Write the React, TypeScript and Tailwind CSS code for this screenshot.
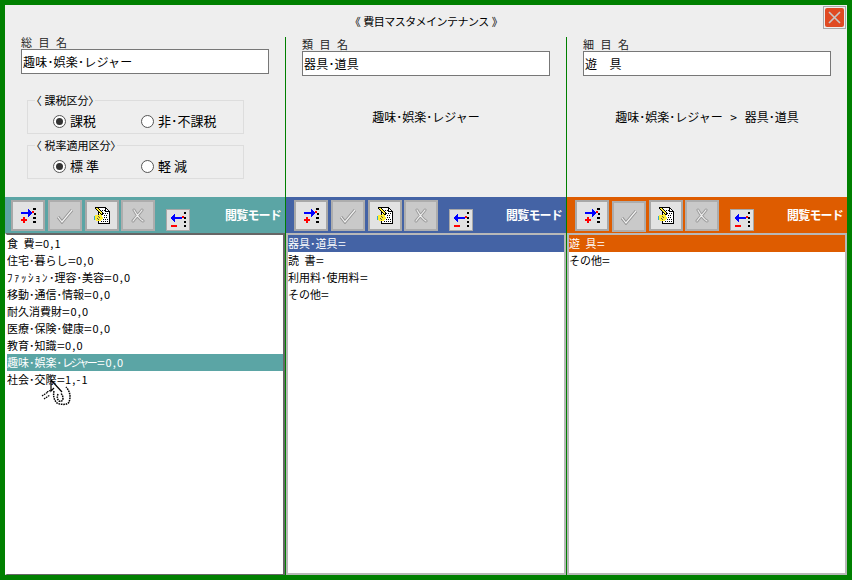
import React from "react";

const font = { fontFamily: '"Noto Sans CJK JP", "Noto Sans", sans-serif' };

function ButtonFrame({ disabled, className, children }: { disabled?: boolean; className: string; children: React.ReactNode }) {
  return (
    <div className={`flex items-center justify-center border-2 ${disabled ? "border-[#adadad] bg-[#c9c9c9]" : "border-[#a8a8a8] bg-[#e2e2e2]"} ${className}`}>
      {children}
    </div>
  );
}

function AddIcon() {
  return (
    <svg width="15" height="16" viewBox="0 0 15 16" shapeRendering="crispEdges">
      <rect x="0" y="4" width="8" height="2" fill="#0000ff" />
      <path d="M7 1h1v1h1v1h1v1h1v2h-1v1h-1v1h-1v1h-1z" fill="#0000ff" />
      <rect x="11" y="3" width="2" height="2" fill="#ff0000" />
      <rect x="12" y="0" width="3" height="2" fill="#000" />
      <rect x="13" y="5" width="2" height="2" fill="#000" />
      <rect x="12" y="9" width="3" height="2" fill="#000" />
      <rect x="12" y="13" width="3" height="2" fill="#000" />
      <rect x="2" y="9" width="2" height="6" fill="#ff0000" />
      <rect x="0" y="11" width="6" height="2" fill="#ff0000" />
    </svg>
  );
}

function RemoveIcon() {
  return (
    <svg width="15" height="16" viewBox="0 0 15 16" shapeRendering="crispEdges">
      <rect x="3" y="5" width="8" height="2" fill="#0000ff" />
      <path d="M4 2h-1v1h-1v1h-1v1h-1v2h1v1h1v1h1v1h1z" fill="#0000ff" />
      <rect x="11" y="4" width="2" height="2" fill="#ff0000" />
      <rect x="13" y="0" width="2" height="2" fill="#000" />
      <rect x="13" y="5" width="2" height="2" fill="#000" />
      <rect x="13" y="9" width="2" height="2" fill="#000" />
      <rect x="13" y="13" width="2" height="2" fill="#000" />
      <rect x="0" y="13" width="6" height="2" fill="#ff0000" />
    </svg>
  );
}

function CheckIcon() {
  return (
    <svg width="18" height="16" viewBox="0 0 18 16">
      <path d="M2 9l4 5L16 2" fill="none" stroke="#929292" strokeWidth="3" />
      <path d="M2 9l4 5L16 2" fill="none" stroke="#f2f2f2" strokeWidth="1.2" />
    </svg>
  );
}

function CrossIcon() {
  return (
    <svg width="14" height="15" viewBox="0 0 14 15">
      <path d="M3 2c2 3 4 8 9 11M11 2C9 5 5 9 2 13" fill="none" stroke="#9a9a9a" strokeWidth="3" strokeLinecap="round" />
      <path d="M3 2c2 3 4 8 9 11M11 2C9 5 5 9 2 13" fill="none" stroke="#eeeeee" strokeWidth="1.2" strokeLinecap="round" />
    </svg>
  );
}

function DocIcon() {
  return (
    <svg width="16" height="17" viewBox="0 0 16 17" shapeRendering="crispEdges">
      <path d="M4.5 .5h7l4 4v12h-11z" fill="#fff" stroke="#000" />
      <path d="M11.5 .5v4h4" fill="none" stroke="#000" />
      <path d="M8 3.5h3M9 6.5h5M10 8.5h4M10 10.5h4M7 12.5h7M7 14.5h7" stroke="#000" strokeDasharray="1 1" />
      <path d="M1 0h2l6 6v2H7L1 2z" fill="#000" />
      <path d="M2 1h1l5 5v1H7L2 2z" fill="#ffee33" />
      <path d="M1 8h3l2-1 2 2 1 2-2 3H2l-1-1z" fill="#ffee33" />
      <path d="M4 9l2 2M3 11l2 2" stroke="#555" />
      <rect x="0" y="9" width="1" height="4" fill="#35a7c9" />
    </svg>
  );
}

function Toolbar({ color, first, second }: { color: string; first: string; second: string }) {
  return (
    <div className={`flex h-9 items-start ${color} ${first} pr-1 pt-[3px]`}>
      <ButtonFrame className="h-[31px] w-[34px]"><AddIcon /></ButtonFrame>
      <ButtonFrame disabled className={`ml-[3px] h-[31px] w-[34px] ${second}`}><CheckIcon /></ButtonFrame>
      <ButtonFrame className="ml-[3px] h-[31px] w-[34px]"><DocIcon /></ButtonFrame>
      <ButtonFrame disabled className="ml-[2px] h-[31px] w-[34px]"><CrossIcon /></ButtonFrame>
      <ButtonFrame className="ml-[11px] mt-[9px] h-[22px] w-[24px] !border"><RemoveIcon /></ButtonFrame>
      <span className="ml-auto mt-[6px] text-[12px] font-bold leading-[18px] tracking-[-0.8px] text-white">閲覧モード</span>
    </div>
  );
}

function Radio({ checked, label, className }: { checked?: boolean; label: string; className: string }) {
  return (
    <div className={`flex items-center ${className}`}>
      <span className="flex h-[13px] w-[13px] items-center justify-center rounded-full border border-[#555555] bg-white">
        {checked && <span className="h-[7px] w-[7px] rounded-full bg-[#333333]" />}
      </span>
      <span className="ml-[4px] text-[13px] leading-4 text-black">{label}</span>
    </div>
  );
}

function Group({ title, a, b, className }: { title: string; a: string; b: string; className: string }) {
  return (
    <fieldset className={`ml-[6px] h-[40px] w-[217px] border border-[#dddddd] ${className}`}>
      <legend className="ml-[7px] px-[1px] text-[11px] leading-[12px] text-black">
        <span className="[font-feature-settings:'palt']">〈</span>
        <span className="ml-[3px]">{title}</span>
        <span className="[font-feature-settings:'palt']">〉</span>
      </legend>
      <div className="flex pt-[7px]">
        <Radio checked label={a} className="ml-[25px] w-[88px]" />
        <Radio label={b} className="" />
      </div>
    </fieldset>
  );
}

function RowText({ text }: { text: string }) {
  const parts = text.split(/(=|[ァ-ヶー]+|[ｦ-ﾟ]+)/).filter(Boolean);
  return (
    <>
      {parts.map((p, i) => {
        if (p === "=") return <span key={i} className="inline-block w-[8.4px] origin-left scale-x-[1.27] leading-[17px]">{p}</span>;
        if (/^[0-9,-]/.test(p)) return <span key={i} className="tracking-[1.2px]">{p}</span>;
        if (/^[ァ-ヶー]/.test(p)) return <span key={i} className="mr-[2px] tracking-[-2.6px]">{p}</span>;
        if (/^[ｦ-ﾟ]/.test(p)) return <span key={i} className="tracking-[1.5px]">{p}</span>;
        return <span key={i}>{p}</span>;
      })}
    </>
  );
}

function Rows({ rows, selected, selColor }: { rows: string[]; selected: number; selColor: string }) {
  return (
    <>
      {rows.map((r, i) => (
        <div
          key={r}
          className={`h-[17px] overflow-hidden whitespace-pre text-[11px] leading-[17px] ${i === selected ? `${selColor} text-white` : "text-black"}`}
        >
          <RowText text={r} />
        </div>
      ))}
    </>
  );
}

function Column({
  label,
  value,
  labelTop,
  toolbar,
  first,
  second,
  selColor,
  listClass,
  rows,
  selected,
  children,
}: {
  label: string;
  value: string;
  labelTop: string;
  toolbar: string;
  first: string;
  second: string;
  selColor: string;
  listClass: string;
  rows: string[];
  selected: number;
  children: React.ReactNode;
}) {
  return (
    <div className="flex w-[280px] flex-col bg-[#eeeeee]">
      <div className={`flex h-40 flex-col px-4 ${labelTop}`}>
        <div className="h-[10px] whitespace-pre text-[11px] leading-[10px] text-[#222222] [word-spacing:4px]">{label}</div>
        <div className="mt-[2px] flex h-[25px] w-[248px] items-center border border-[#777777] bg-white pl-[1px] text-[12px] tracking-[0.2px] text-black">
          {value}
        </div>
        {children}
      </div>
      <Toolbar color={toolbar} first={first} second={second} />
      <div className={`min-h-0 flex-1 bg-white ${listClass}`}>
        <Rows rows={rows} selected={selected} selColor={selColor} />
      </div>
    </div>
  );
}

function HandCursor() {
  return (
    <svg className="absolute left-[36px] top-[374px]" width="32" height="30" viewBox="0 0 32 30" fill="none" stroke="#000" strokeWidth="1.2">
      <path d="M10 1l11 12" />
      <path d="M10 1v11l3-3" />
      <path d="M1 17l6-4M3 20l6-4M6 13l4-2" strokeDasharray="1.6 0.8" />
      <path d="M13 12c-1 5 0 9 3 12 4 2 11 2 12-1 2-5 1-11-3-15" strokeWidth="1.5" strokeDasharray="1.6 0.8" />
      <path d="M17 15c-1 3-1 5 1 7 2 1 4 0 4-3 0-2-1-3-2-5" strokeWidth="1.5" strokeDasharray="1.6 0.8" />
    </svg>
  );
}

export default function App() {
  return (
    <div style={font} className="relative box-border h-[580px] w-[852px] border-[5px] border-[#008000] bg-[#eeeeee]">
      <div className="flex h-8 items-center justify-center pt-[1px] text-[11px] tracking-[-0.5px] text-black [word-spacing:1px]">《 費目マスタメインテナンス 》</div>
      <div className="absolute right-[1px] top-[1px] flex h-[23px] w-[23px] items-center justify-center border border-[#a8a8a8] bg-[#eeeeee]">
        <div className="flex h-[19px] w-[19px] items-center justify-center rounded-[2px] bg-[#e04a22]">
          <svg width="15" height="15" viewBox="0 0 15 15">
            <path d="M2 2l11 11M13 2L2 13" stroke="#c8c8c8" strokeWidth="1.6" />
          </svg>
        </div>
      </div>
      <div className="flex h-[538px] gap-px bg-[#008000]">
        <Column
          label="総 目 名"
          value="趣味･娯楽･レジャー"
          labelTop="pt-0"
          toolbar="bg-[#5ba5a5]"
          first="pl-[6px]"
          second=""
          selColor="bg-[#5ba5a5]"
          listClass="border-t-2 border-r-2 border-[#666666] border-l-2 border-l-white border-b border-b-[#666666]"
          selected={7}
          rows={[
            "食\u2002費=0,1",
            "住宅･暮らし=0,0",
            "ﾌｧｯｼｮﾝ･理容･美容=0,0",
            "移動･通信･情報=0,0",
            "耐久消費財=0,0",
            "医療･保険･健康=0,0",
            "教育･知識=0,0",
            "趣味･娯楽･レジャー=0,0",
            "社会･交際=1,-1",
          ]}
        >
          <Group title="課税区分" a="課税" b="非･不課税" className="mt-[20px]" />
          <Group title="税率適用区分" a="標 準" b="軽 減" className="mt-[5px]" />
        </Column>
        <Column
          label="類 目 名"
          value="器具･道具"
          labelTop="pt-[2px]"
          toolbar="bg-[#4463a5]"
          first="pl-[8px]"
          second=""
          selColor="bg-[#4463a5]"
          listClass="border-2 border-[#b8b8b8]"
          selected={0}
          rows={["器具･道具=", "読\u2002書=", "利用料･使用料=", "その他="]}
        >
          <div className="mt-[33px] text-center text-[12px] leading-4 text-black">趣味･娯楽･レジャー</div>
        </Column>
        <Column
          label="細 目 名"
          value="遊　具"
          labelTop="pt-[2px]"
          toolbar="bg-[#de5c00]"
          first="pl-[8px]"
          second="mt-[1px]"
          selColor="bg-[#de5c00]"
          listClass="border-2 border-[#b8b8b8]"
          selected={0}
          rows={["遊\u2002具=", "その他="]}
        >
          <div className="mt-[33px] text-center text-[12px] leading-4 text-black [word-spacing:5px]">趣味･娯楽･レジャー &gt; 器具･道具</div>
        </Column>
      </div>
      <HandCursor />
    </div>
  );
}
